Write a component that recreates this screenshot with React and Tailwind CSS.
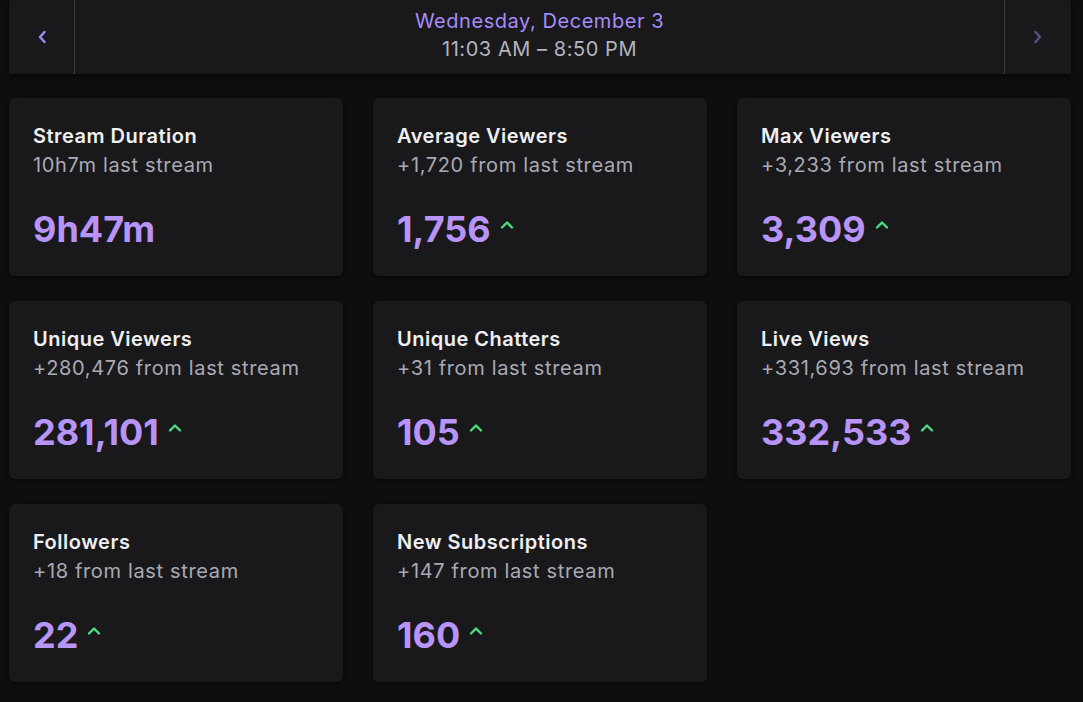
import React from 'react';

const stats = [
  { title: 'Stream Duration', sub: '10h7m last stream', value: '9h47m', up: false },
  { title: 'Average Viewers', sub: '+1,720 from last stream', value: '1,756', up: true },
  { title: 'Max Viewers', sub: '+3,233 from last stream', value: '3,309', up: true },
  { title: 'Unique Viewers', sub: '+280,476 from last stream', value: '281,101', up: true },
  { title: 'Unique Chatters', sub: '+31 from last stream', value: '105', up: true },
  { title: 'Live Views', sub: '+331,693 from last stream', value: '332,533', up: true },
  { title: 'Followers', sub: '+18 from last stream', value: '22', up: true },
  { title: 'New Subscriptions', sub: '+147 from last stream', value: '160', up: true },
];

function Chevron({ dir, className }) {
  const d = dir === 'left' ? 'M10.5 3 L6 8 L10.5 13' : dir === 'right' ? 'M5.5 3 L10 8 L5.5 13' : 'M3 10.5 L8 5.5 L13 10.5';
  return (
    <svg viewBox="0 0 16 16" className={className} fill="none" stroke="currentColor" strokeWidth="2.4" strokeLinecap="round" strokeLinejoin="round">
      <path d={d} />
    </svg>
  );
}

export default function App() {
  return (
    <div className="min-h-screen bg-[#0e0e10] pl-[9px] pr-[12px] font-['Inter','Liberation_Sans',sans-serif]">
      <div className="flex h-[74px] bg-[#19191c] shadow-[0_2px_6px_rgba(0,0,0,0.6)]">
        <div className="flex w-[66px] items-center justify-center border-r border-[#3a3a3e]">
          <Chevron dir="left" className="h-[16px] w-[16px] text-[#a78bfa]" />
        </div>
        <div className="flex flex-1 flex-col items-center pt-[7px] text-[20px] tracking-[0.55px]">
          <div className="leading-[28px] text-[#a78bfa]">Wednesday, December 3</div>
          <div className="leading-[28px] text-[#b4b4bc]">11:03 AM – 8:50 PM</div>
        </div>
        <div className="flex w-[67px] items-center justify-center border-l border-[#3a3a3e]">
          <Chevron dir="right" className="h-[16px] w-[16px] text-[#5b4f8a]" />
        </div>
      </div>

      <div className="mt-[24px] grid grid-cols-3 gap-x-[30px] gap-y-[25px]">
        {stats.map((s, i) => (
          <div key={i} className="h-[178px] rounded-[6px] bg-[#19191c] px-[24px] pt-[24px] shadow-[0_1px_4px_rgba(0,0,0,0.6)]">
            <div className="text-[20px] font-semibold leading-[28px] tracking-[0.5px] text-[#efeff1]">{s.title}</div>
            <div className="text-[20px] leading-[30px] tracking-[0.65px] text-[#a9a9b3]">{s.sub}</div>
            <div className="mt-[27px] flex items-center gap-[8px]">
              <span className="text-[36px] font-bold leading-[44px] text-[#b794f6]">{s.value}</span>
              {s.up && <Chevron dir="up" className="mb-[8px] h-[16px] w-[16px] text-[#4ade80]" />}
            </div>
          </div>
        ))}
      </div>
    </div>
  );
}
